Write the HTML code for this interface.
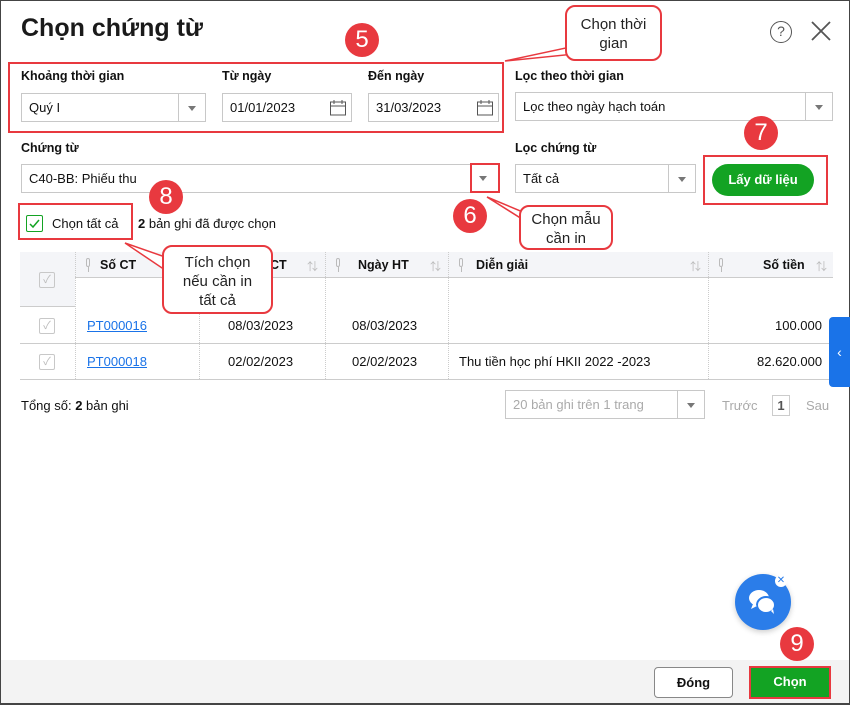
<!DOCTYPE html>
<html><head><meta charset="utf-8"><style>
*{box-sizing:border-box;margin:0;padding:0}
body{width:850px;height:705px;position:relative;overflow:hidden;background:#fff;font-family:"Liberation Sans","Noto Sans CJK SC",sans-serif;font-size:13px;color:#111}
.a{position:absolute}
.frame{left:0;top:0;width:850px;height:705px;border:1px solid #444;border-bottom-width:2px}
.lbl{font-weight:bold;font-size:12.5px}
.inp{border:1px solid #c8c8c8;background:#fff;height:29px;padding:0 7px;line-height:27px;font-size:13px}
.dd{position:absolute;right:0;top:0;width:27px;height:27px;border-left:1px solid #c8c8c8}
.dd:after{content:"";position:absolute;left:9px;top:12px;border:4px solid transparent;border-top:5px solid #777}
.red{border:2.5px solid #e8393f}
.num{width:34px;height:34px;border-radius:50%;background:#e8393f;color:#fff;font-size:24px;text-align:center;line-height:34px}
.call{border:2px solid #e8393f;border-radius:10px;background:#fff;text-align:center;font-size:15px;line-height:19px;color:#222}
.cb{width:16px;height:16px;border:1px solid #c8c8c8;border-radius:2px;color:#bbb;font-size:11px;text-align:center;line-height:14px}
.th{font-weight:bold;font-size:12.5px}
.cell{font-size:13px}
.vl{width:0;border-left:1px dotted #ccc}
.pin{position:absolute;top:258px;width:4px;height:9px;border:1px solid #bbb;border-radius:2px}
.pin:after{content:"";position:absolute;left:0.5px;top:8px;width:1px;height:5px;background:#bbb}
</style></head><body>
<div class="a frame"></div>
<div class="a" style="left:21px;top:14px;font-size:25px;font-weight:bold;color:#1a1a1a">Chọn chứng từ</div>
<div class="a" style="left:770px;top:21px;width:22px;height:22px;border:1.5px solid #555;border-radius:50%;text-align:center;line-height:19px;font-size:14px;color:#555">?</div>
<svg class="a" style="left:811px;top:21px" width="20" height="20"><path d="M1 1L19 19M19 1L1 19" stroke="#555" stroke-width="1.8"/></svg>

<div class="a red" style="left:8px;top:62px;width:496px;height:71px"></div>
<div class="a lbl" style="left:21px;top:69px">Khoảng thời gian</div>
<div class="a lbl" style="left:222px;top:69px">Từ ngày</div>
<div class="a lbl" style="left:368px;top:69px">Đến ngày</div>
<div class="a inp" style="left:21px;top:93px;width:185px">Quý I<div class="dd"></div></div>
<div class="a inp" style="left:222px;top:93px;width:130px">01/01/2023</div>
<div class="a inp" style="left:368px;top:93px;width:131px">31/03/2023</div>
<svg class="a" style="left:329px;top:99px" width="18" height="18"><rect x="1.5" y="3" width="15" height="13" fill="none" stroke="#555"/><path d="M1.5 7h15M5 1v4M13 1v4" stroke="#555"/></svg>
<svg class="a" style="left:476px;top:99px" width="18" height="18"><rect x="1.5" y="3" width="15" height="13" fill="none" stroke="#555"/><path d="M1.5 7h15M5 1v4M13 1v4" stroke="#555"/></svg>

<div class="a lbl" style="left:515px;top:69px">Lọc theo thời gian</div>
<div class="a inp" style="left:515px;top:92px;width:318px">Lọc theo ngày hạch toán<div class="dd"></div></div>

<div class="a lbl" style="left:21px;top:141px">Chứng từ</div>
<div class="a inp" style="left:21px;top:164px;width:478px">C40-BB: Phiếu thu</div>
<div class="a" style="left:479px;top:176px;border:4px solid transparent;border-top:5px solid #777"></div>
<div class="a red" style="left:470px;top:163px;width:30px;height:30px"></div>

<div class="a lbl" style="left:515px;top:141px">Lọc chứng từ</div>
<div class="a inp" style="left:515px;top:164px;width:181px">Tất cả<div class="dd"></div></div>
<div class="a red" style="left:703px;top:155px;width:125px;height:50px"></div>
<div class="a" style="left:712px;top:164px;width:102px;height:32px;border-radius:16px;background:#13a323;color:#fff;font-weight:bold;text-align:center;line-height:32px;font-size:13px">Lấy dữ liệu</div>

<div class="a red" style="left:18px;top:203px;width:115px;height:37px"></div>
<div class="a" style="left:26px;top:215px;width:17px;height:17px;border:1px solid #13a323;border-radius:2px"></div>
<svg class="a" style="left:28px;top:217px" width="13" height="13"><path d="M2 7l3 3 6-7" stroke="#13a323" stroke-width="1.5" fill="none"/></svg>
<div class="a" style="left:52px;top:216px">Chọn tất cả</div>
<div class="a" style="left:138px;top:216px"><b>2</b> bản ghi đã được chọn</div>

<div class="a" style="left:20px;top:252px;width:813px;height:55px;background:#f4f5f8;border-bottom:1px solid #ccc"></div>
<div class="a" style="left:75px;top:277px;width:758px;height:1px;background:#ccc"></div>
<div class="a" style="left:75px;top:278px;width:758px;height:29px;background:#fff"></div>
<div class="a" style="left:20px;top:343px;width:813px;height:1px;background:#ccc"></div>
<div class="a" style="left:20px;top:379px;width:813px;height:1px;background:#ccc"></div>
<div class="a vl" style="left:75px;top:252px;height:127px"></div>
<div class="a vl" style="left:199px;top:252px;height:127px"></div>
<div class="a vl" style="left:325px;top:252px;height:127px"></div>
<div class="a vl" style="left:448px;top:252px;height:127px"></div>
<div class="a vl" style="left:708px;top:252px;height:127px"></div>
<div class="pin" style="left:86px"></div>
<div class="pin" style="left:336px"></div>
<div class="pin" style="left:459px"></div>
<div class="pin" style="left:719px"></div>
<div class="a cb" style="left:39px;top:272px">✓</div>
<div class="a cb" style="left:39px;top:318px">✓</div>
<div class="a cb" style="left:39px;top:354px">✓</div>
<div class="a th" style="left:100px;top:258px">Số CT</div>
<div class="a th" style="left:270px;top:258px">CT</div>
<div class="a th" style="left:358px;top:258px">Ngày HT</div>
<div class="a th" style="left:476px;top:258px">Diễn giải</div>
<div class="a th" style="left:763px;top:258px">Số tiền</div>
<div class="a" style="left:307px;top:258px;color:#bbb;font-size:11px">⇅</div>
<div class="a" style="left:430px;top:258px;color:#bbb;font-size:11px">⇅</div>
<div class="a" style="left:690px;top:258px;color:#bbb;font-size:11px">⇅</div>
<div class="a" style="left:816px;top:258px;color:#bbb;font-size:11px">⇅</div>
<div class="a cell" style="left:87px;top:318px;color:#1a73e8;text-decoration:underline">PT000016</div>
<div class="a cell" style="left:228px;top:318px">08/03/2023</div>
<div class="a cell" style="left:352px;top:318px">08/03/2023</div>
<div class="a cell" style="left:775px;top:318px">100.000</div>
<div class="a cell" style="left:87px;top:354px;color:#1a73e8;text-decoration:underline">PT000018</div>
<div class="a cell" style="left:228px;top:354px">02/02/2023</div>
<div class="a cell" style="left:352px;top:354px">02/02/2023</div>
<div class="a cell" style="left:459px;top:354px">Thu tiền học phí HKII 2022 -2023</div>
<div class="a cell" style="left:757px;top:354px">82.620.000</div>
<div class="a" style="left:829px;top:317px;width:21px;height:70px;background:#1a73e8;border-radius:4px 0 0 4px;color:#fff;text-align:center;line-height:70px;font-size:14px">‹</div>

<div class="a" style="left:21px;top:398px">Tổng số: <b>2</b> bản ghi</div>
<div class="a inp" style="left:505px;top:390px;width:200px;color:#aaa">20 bản ghi trên 1 trang<div class="dd"></div></div>
<div class="a" style="left:722px;top:398px;color:#aaa">Trước</div>
<div class="a" style="left:772px;top:395px;width:18px;height:21px;border:1px solid #ccc;text-align:center;line-height:19px;font-weight:bold;color:#555">1</div>
<div class="a" style="left:806px;top:398px;color:#aaa">Sau</div>

<div class="a" style="left:1px;top:660px;width:848px;height:43px;background:#f3f3f3"></div>
<div class="a" style="left:654px;top:667px;width:79px;height:31px;border:1px solid #888;border-radius:4px;background:#fff;text-align:center;line-height:29px;font-weight:bold">Đóng</div>
<div class="a" style="left:749px;top:666px;width:82px;height:33px;background:#13a323;border:2.5px solid #e8393f;color:#fff;text-align:center;line-height:28px;font-weight:bold">Chọn</div>

<div class="a" style="left:735px;top:574px;width:56px;height:56px;border-radius:50%;background:#2b7de9;box-shadow:0 2px 6px rgba(0,0,0,.2)"></div>
<svg class="a" style="left:745px;top:585px" width="36" height="36"><ellipse cx="14" cy="13" rx="10" ry="8" fill="#fff"/><ellipse cx="21" cy="20" rx="9" ry="8" fill="#fff" stroke="#2b7de9" stroke-width="2"/><path d="M8 19l-2 5 6-3z" fill="#fff"/><path d="M26 26l3 3-1-5z" fill="#fff"/></svg>
<div class="a" style="left:775px;top:575px;width:12px;height:12px;border-radius:50%;background:#fff;color:#2b7de9;font-size:10px;text-align:center;line-height:12px">✕</div>

<div class="a num" style="left:345px;top:23px">5</div>
<div class="a num" style="left:453px;top:199px">6</div>
<div class="a num" style="left:744px;top:116px">7</div>
<div class="a num" style="left:149px;top:180px">8</div>
<div class="a num" style="left:780px;top:627px">9</div>

<svg class="a" style="left:0;top:0" width="850" height="705">
<path d="M505 61L575 46L575 54Z" fill="#fff" stroke="#e8393f" stroke-width="1.5"/>
<path d="M487 197L530 215L530 224Z" fill="#fff" stroke="#e8393f" stroke-width="1.5"/>
<path d="M125 243L168 258L168 272Z" fill="#fff" stroke="#e8393f" stroke-width="1.5"/>
</svg>
<div class="a call" style="left:565px;top:5px;width:97px;height:56px;padding-top:8px">Chọn thời<br>gian</div>
<div class="a call" style="left:519px;top:205px;width:94px;height:45px;padding-top:3px">Chọn mẫu<br>cần in</div>
<div class="a call" style="left:162px;top:245px;width:111px;height:69px;padding-top:6px">Tích chọn<br>nếu cần in<br>tất cả</div>
</body></html>
